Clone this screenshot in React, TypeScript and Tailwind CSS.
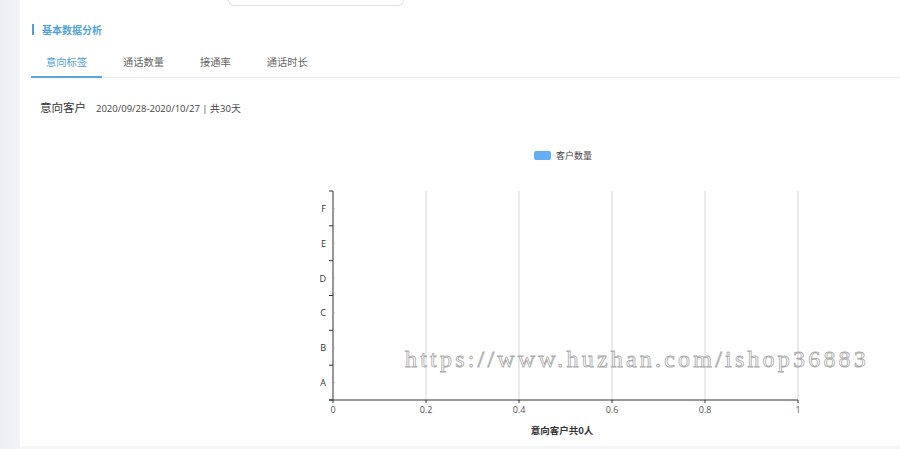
import React from 'react'

const tabs = ['意向标签', '通话数量', '接通率', '通话时长']
const xTicks = [0, 0.2, 0.4, 0.6, 0.8, 1]
const yCats = ['A', 'B', 'C', 'D', 'E', 'F']

// chart geometry, in svg coordinates (svg starts at the panel's left edge)
const X0 = 313
const X1 = 778
const Y0 = 53
const Y1 = 262

function Chart() {
  const step = (Y1 - Y0) / yCats.length
  return (
    <svg width="880" height="300" className="block" style={{ fontFamily: '"Noto Sans CJK SC", sans-serif' }}>
      {/* legend */}
      <rect x="514" y="13" width="17" height="9" rx="2" fill="#63aef5" />
      <text x="536" y="21" fontSize="9" fill="#444">客户数量</text>

      {/* grid */}
      {xTicks.slice(1).map((t) => {
        const x = X0 + (X1 - X0) * t
        return <line key={t} x1={x} y1={Y0} x2={x} y2={Y1} stroke="#d6d6d6" strokeWidth="1" />
      })}

      {/* y axis */}
      <line x1={X0} y1={Y0} x2={X0} y2={Y1} stroke="#333" strokeWidth="1" />
      {Array.from({ length: yCats.length + 1 }).map((_, i) => {
        const y = Y0 + step * i
        return <line key={i} x1={X0 - 4} y1={y} x2={X0} y2={y} stroke="#333" strokeWidth="1" />
      })}
      {yCats.map((c, i) => {
        const y = Y1 - step * (i + 0.5)
        return (
          <g key={c}>
            <line x1={X0} y1={y} x2={X0 + 1.5} y2={y} stroke="#999" strokeWidth="1" />
            <text x={X0 - 7} y={y + 3.5} fontSize="9" fill="#333" textAnchor="end" fontFamily='"Open Sans", sans-serif'>
              {c}
            </text>
          </g>
        )
      })}

      {/* x axis */}
      <line x1={X0 - 4} y1={Y1} x2={X1} y2={Y1} stroke="#333" strokeWidth="1" />
      {xTicks.map((t) => {
        const x = X0 + (X1 - X0) * t
        return (
          <g key={t}>
            <line x1={x} y1={Y1} x2={x} y2={Y1 + 3} stroke="#333" strokeWidth="1" />
            <text x={x} y={Y1 + 13} fontSize="9" fill="#555" textAnchor="middle" fontFamily='"Open Sans", sans-serif'>
              {t}
            </text>
          </g>
        )
      })}
      <text x={542} y={296} fontSize="9.5" fontWeight="bold" fill="#333" textAnchor="middle">
        意向客户共0人
      </text>
    </svg>
  )
}

export default function App() {
  return (
    <div className="relative flex h-[449px] w-[900px] overflow-hidden bg-[#f4f5f8] font-['Noto_Sans_CJK_SC',sans-serif]">
      <div className="w-[20px] shrink-0 bg-gradient-to-r from-[#eceef3] to-[#f3f4f7]" />
      <div className="flex h-[446px] flex-1 flex-col bg-white [&>*]:shrink-0">
        {/* top search pill remnant */}
        <div className="ml-[208px] h-[6px] w-[176px] rounded-b-[12px] border-x border-b border-[#e2e2e2]" />

        <div className="ml-[12px] mt-[18px] flex items-center gap-[8px]">
          <div className="h-[11px] w-[2px] bg-[#4ea2dc]" />
          <span className="text-[10px] font-bold leading-none text-[#4ea2dc]">基本数据分析</span>
        </div>

        <div className="ml-[11px] mt-[20px] flex gap-[6px] border-b border-[#ececec]">
          {tabs.map((t, i) => (
            <div
              key={t}
              className={
                i === 0
                  ? 'mb-[-1px] border-b-2 border-[#58a6dc] px-[15px] pb-[7px] text-[10.25px] leading-[14px] text-[#4ea2dc]'
                  : 'mb-[-1px] px-[15px] pb-[9px] text-[10.25px] leading-[14px] text-[#666]'
              }
            >
              {t}
            </div>
          ))}
        </div>

        <div className="ml-[20px] mt-[21px] flex items-baseline gap-[10px]">
          <span className="text-[11.5px] text-[#333]">意向客户</span>
          <span className="font-['Open_Sans',sans-serif] text-[9.5px] text-[#444]">2020/09/28-2020/10/27 | 共30天</span>
        </div>

        <div className="mt-[22px]">
          <Chart />
        </div>
      </div>

      {/* watermark */}
      <div className="pointer-events-none absolute left-[405px] top-[347px] font-['Liberation_Serif',serif] text-[24px] leading-none tracking-[3.2px] text-transparent [-webkit-text-stroke:0.8px_#aaa]">
        https://www.huzhan.com/ishop36883
      </div>
    </div>
  )
}
